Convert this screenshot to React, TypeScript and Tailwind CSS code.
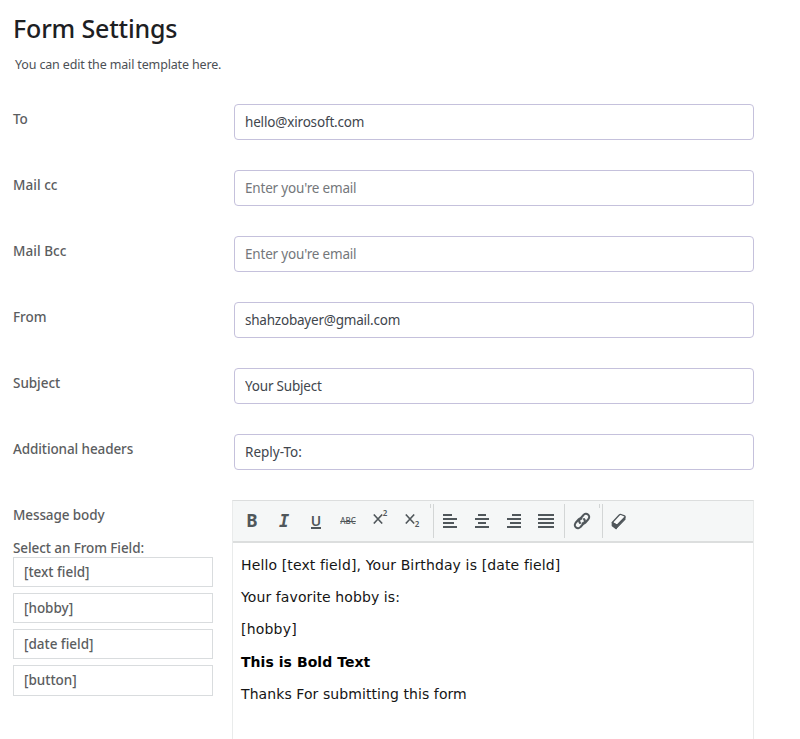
import type { ReactNode } from "react";

const fields = [
  { label: "To", value: "hello@xirosoft.com", labelTracking: "tracking-[-0.1px]", tracking: "tracking-[-0.17px]" },
  { label: "Mail cc", placeholder: "Enter you're email", labelTracking: "tracking-[0.05px]", tracking: "tracking-[-0.18px]" },
  { label: "Mail Bcc", placeholder: "Enter you're email", labelTracking: "tracking-[0.05px]", tracking: "tracking-[-0.18px]" },
  { label: "From", value: "shahzobayer@gmail.com", labelTracking: "tracking-[-0.05px]", tracking: "tracking-[-0.22px]" },
  { label: "Subject", value: "Your Subject", labelTracking: "tracking-[-0.05px]", tracking: "tracking-[-0.2px]" },
  { label: "Additional headers", value: "Reply-To:", labelTracking: "tracking-[-0.1px]", tracking: "tracking-[0px]" },
];

const tags = ["[text field]", "[hobby]", "[date field]", "[button]"];

function Tool({ label, children }: { label: string; children: ReactNode }) {
  return (
    <button type="button" aria-label={label} className="flex h-full w-8 shrink-0 items-center justify-center">
      {children}
    </button>
  );
}

function Lines({ d }: { d: string }) {
  return (
    <svg width="18" height="16" viewBox="0 0 18 16" fill="none" stroke="#50575b" strokeWidth="1.8">
      <path d={d} />
    </svg>
  );
}

function Cross() {
  return (
    <svg className="mt-[3px]" width="10" height="10" viewBox="0 0 10 10" fill="none" stroke="#50575b" strokeWidth="1.6">
      <path d="m.8.5 8.400 9M9.200.5.8 9.500" />
    </svg>
  );
}

function Separator({ tick = true }: { tick?: boolean }) {
  return (
    <span className="flex h-[34px] shrink-0 gap-[2px] self-start pt-[3px]">
      {tick && <span className="h-1 w-px bg-[#d3d6d6]" />}
      <span className="h-[34px] w-px bg-[#d3d6d6]" />
    </span>
  );
}

export default function App() {
  return (
    <main className="h-[739px] w-[800px] overflow-hidden bg-white pl-[13px] font-['Noto_Sans',sans-serif] text-[#5b5d60]">
      <h1 className="pt-[10px] text-[25px] leading-9 font-medium tracking-[-0.17px] text-[#1d2023]">Form Settings</h1>
      <p className="mt-[9px] pl-0.5 text-[12.5px] leading-5 tracking-[-0.15px] text-[#4c5055]">You can edit the mail template here.</p>
      <form className="mt-[29px]">
        {fields.map((f) => (
          <div key={f.label} className="flex h-[66px]">
            <label className={`w-[221px] pt-[5px] text-[13.5px] leading-5 font-medium ${f.labelTracking}`}>{f.label}</label>
            <input
              className={`h-9 w-[520px] rounded-[4px] border border-[#c5c1dc] bg-white px-2.5 text-[13.5px] text-[#41464d] placeholder:text-[#74777b] ${f.tracking}`}
              defaultValue={f.value}
              placeholder={f.placeholder}
            />
          </div>
        ))}
        <div className="flex">
          <div className="w-[219px] pt-[5px] text-[13.5px] font-medium">
            <div className="leading-5 tracking-[-0.1px]">Message body</div>
            <div className="mt-[13px] leading-5 tracking-[-0.09px]">Select an From Field:</div>
            <ul className="-mt-px flex flex-col gap-1.5">
              {tags.map((t) => (
                <li key={t} className="h-[30px] w-[200px] border border-[#d9dcde] pl-[10px] leading-7 tracking-[-0.02px] last:h-[31px]">
                  {t}
                </li>
              ))}
            </ul>
          </div>
          <section className="h-[260px] w-[522px] border border-t-[#dcdede] border-[#e9ebeb]">
            <div className="flex h-[42px] items-center border-b-2 border-[#dcdede] bg-[#f5f7f7] pl-[3px] text-[#50575b]">
              <Tool label="Bold"><span className="text-[17px] leading-5 font-bold">B</span></Tool>
              <Tool label="Italic"><span className="font-['DejaVu_Sans_Mono',monospace] text-[17px] leading-5 font-bold italic">I</span></Tool>
              <Tool label="Underline">
                <span className="mt-0.5 border-b-2 border-[#50575b] text-[14px] leading-[12px] font-semibold">U</span>
              </Tool>
              <Tool label="Strikethrough"><span className="text-[8px] leading-5 font-medium line-through">ABC</span></Tool>
              <Tool label="Superscript">
                <span className="flex h-5 items-start pb-1">
                  <Cross />
                  <span className="-mt-[3px] text-[8px] leading-[10px] font-semibold">2</span>
                </span>
              </Tool>
              <Tool label="Subscript">
                <span className="flex h-5 items-start pb-1">
                  <Cross />
                  <span className="mt-[8px] text-[8px] leading-[10px] font-semibold">2</span>
                </span>
              </Tool>
              <span className="w-[2px]" />
              <Separator />
              <Tool label="Align left"><Lines d="M2 2h9M2 6h14M2 10h11M2 14h14" /></Tool>
              <Tool label="Align center"><Lines d="M5 2h8M2 6h14M5 10h8M2 14h14" /></Tool>
              <Tool label="Align right"><Lines d="M7 2h9M2 6h14M5 10h11M2 14h14" /></Tool>
              <Tool label="Justify"><Lines d="M1 2h16M1 6h16M1 10h16M1 14h16" /></Tool>
              <span className="w-[2px]" />
              <Separator tick={false} />
              <span className="w-px" />
              <Tool label="Insert link">
                <svg width="18" height="18" viewBox="0 0 18 18" fill="none" stroke="#50575b" strokeWidth="2" strokeLinecap="round">
                  <path d="M7 11a3 3 0 0 1 0-4l3.500-4a3 3 0 0 1 5 4l-3 3.500a3 3 0 0 1-3 .8" />
                  <path d="M11 7a3 3 0 0 1 0 4l-3.500 4a3 3 0 0 1-5-4l3-3.500a3 3 0 0 1 3-.8" />
                </svg>
              </Tool>
              <span className="w-[1px]" />
              <Separator />
              <Tool label="Clear formatting">
                <svg width="16" height="17" viewBox="0 0 16 17" fill="none" stroke="#50575b" strokeWidth="1.3" strokeLinejoin="round">
                  <path d="M1.300 9.500 8 2.200Q9 1.200 10 1.500l3.500 1.300q1 .5.300 1.500L6 12.300z" fill="#fafbfb" />
                  <path d="M1.300 9.500v3.300l3.900 2.800.8-3.300z" fill="#50575b" />
                  <path d="m5.200 15.600 1-3.300 7.800-8.300v2.500z" fill="#50575b" strokeWidth="1" />
                </svg>
              </Tool>
            </div>
            <div className="flex flex-col px-2 pt-[13px] font-['DejaVu_Sans',sans-serif] text-[14px] leading-[18px] text-[#151515]">
              <p className="mb-[14px] tracking-[0.13px] whitespace-nowrap">Hello [text field], Your Birthday is [date field]</p>
              <p className="mb-[14px] tracking-[0.1px]">Your favorite hobby is:</p>
              <p className="mb-[15px] tracking-[0.2px]">[hobby]</p>
              <p className="mb-[14px] font-bold tracking-[0.05px] text-black">This is Bold Text</p>
              <p className="tracking-[0.08px]">Thanks For submitting this form</p>
            </div>
          </section>
        </div>
      </form>
    </main>
  );
}
